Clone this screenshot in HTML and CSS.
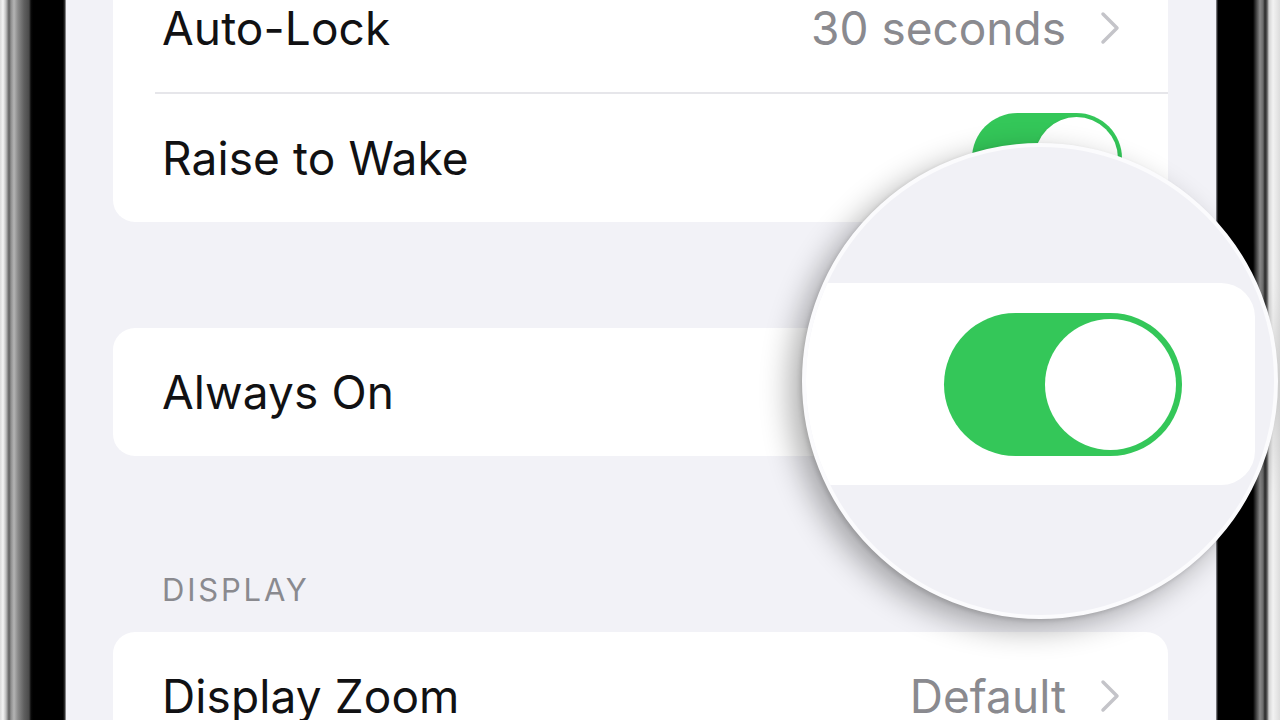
FILE: index.html
```html
<!DOCTYPE html>
<html lang="en">
<head>
<meta charset="utf-8">
<title>Display &amp; Brightness</title>
<link rel="stylesheet" href="styles.css">
</head>
<body>
<div class="device">
  <div class="bezel bezel-left"></div>
  <main class="screen">
    <section class="card card-first">
      <div class="row">
        <span class="label">Auto-Lock</span>
        <span class="value">30 seconds
          <svg class="chev" width="20" height="34" viewBox="0 0 20 34"><path d="M3 3 L17 17 L3 31" fill="none" stroke="#c4c4c9" stroke-width="3.5" stroke-linecap="round" stroke-linejoin="round"/></svg>
        </span>
      </div>
      <div class="sep"></div>
      <div class="row">
        <span class="label">Raise to Wake</span>
        <span class="toggle"><span class="knob"></span></span>
      </div>
    </section>

    <section class="card card-always">
      <div class="row">
        <span class="label">Always On</span>
        <span class="toggle"><span class="knob"></span></span>
      </div>
    </section>

    <h2 class="section-head">DISPLAY</h2>
    <section class="card">
      <div class="row">
        <span class="label">Display Zoom</span>
        <span class="value">Default
          <svg class="chev" width="20" height="34" viewBox="0 0 20 34"><path d="M3 3 L17 17 L3 31" fill="none" stroke="#c4c4c9" stroke-width="3.5" stroke-linecap="round" stroke-linejoin="round"/></svg>
        </span>
      </div>
    </section>
  </main>
  <div class="bezel bezel-right"></div>

  <div class="lens" aria-hidden="true">
    <div class="lens-band">
      <span class="toggle toggle-big"><span class="knob"></span></span>
    </div>
  </div>
</div>
</body>
</html>
```

FILE: styles.css
```css
* { box-sizing: border-box; }

html, body {
  margin: 0;
  padding: 0;
  width: 1280px;
  height: 720px;
  overflow: hidden;
  background: #000;
  font-family: "Inter", "Liberation Sans", sans-serif;
}

.device {
  position: relative;
  display: flex;
  width: 1280px;
  height: 720px;
}

.bezel-left {
  width: 66px;
  flex: none;
  background: linear-gradient(to right,
    #d9d9d9 0px, #f4f4f4 3px, #bdbdbd 6px, #5e5e5e 9px, #8f8f8f 11px,
    #b4b4b4 14px, #8a8a8a 18px, #606060 24px, #4a4a4a 29px, #0a0a0a 31px,
    #000 33px, #000 63px, #3a3a3a 65px, #cfcfd4 66px);
}

.bezel-right {
  width: 64px;
  flex: none;
  background: linear-gradient(to right,
    #9a9aa0 0px, #000 2px, #000 37px, #3c3c3c 40px, #8a8a8a 44px,
    #6c6c6c 47px, #2a2a2a 49px, #5a5a5a 51px, #d4d4d4 53px, #f2f2f2 57px, #dcdcdc 64px);
}

.screen {
  flex: 1;
  background: #f2f2f7;
  padding: 0 48px 0 47px;
  display: flex;
  flex-direction: column;
  overflow: hidden;
}

.card {
  background: #ffffff;
  border-radius: 22px;
  flex: none;
}

.card-first { margin-top: -36px; }
.card-always { margin-top: 106px; }

.row {
  height: 128px;
  display: flex;
  align-items: center;
  justify-content: space-between;
  padding: 0 46px 0 49px;
}

.sep {
  height: 2px;
  background: #e6e6ea;
  margin-left: 42px;
}

.label {
  font-size: 46px;
  line-height: 46px;
  color: #111113;
  letter-spacing: 0.1px;
}

.value {
  display: flex;
  align-items: center;
  gap: 34px;
  font-size: 46px;
  line-height: 46px;
  color: #8a8a8f;
}

.chev { display: block; margin-right: 2px; }

.section-head {
  margin: 116px 0 0 0;
  padding-left: 49px;
  font-size: 31px;
  line-height: 36px;
  font-weight: 400;
  letter-spacing: 2.8px;
  color: #8a8a8f;
}

.section-head + .card { margin-top: 24px; }

.toggle {
  width: 150px;
  height: 91px;
  border-radius: 46px;
  background: #34c759;
  display: flex;
  align-items: center;
  justify-content: flex-end;
  padding: 4px;
  flex: none;
}

.knob {
  width: 83px;
  height: 83px;
  border-radius: 50%;
  background: #ffffff;
  box-shadow: 0 2px 4px rgba(0, 0, 0, 0.12);
}

/* magnifier overlay */
.lens {
  position: absolute;
  left: 802px;
  top: 143px;
  width: 476px;
  height: 476px;
  border-radius: 50%;
  background: #f1f1f6;
  border: 4px solid #fbfbfd;
  overflow: hidden;
  padding-top: 136px;
  box-shadow: -12px 10px 30px rgba(0, 0, 0, 0.32), -2px 2px 4px rgba(0, 0, 0, 0.12);
}

.lens-band {
  height: 202px;
  width: 489px;
  margin-left: -40px;
  background: #ffffff;
  border-radius: 0 34px 34px 0;
  display: flex;
  align-items: center;
  justify-content: flex-end;
  padding-right: 73px;
}

.toggle-big {
  width: 238px;
  height: 143px;
  border-radius: 72px;
  padding: 6px;
}

.toggle-big .knob {
  width: 131px;
  height: 131px;
  box-shadow: none;
}
```
